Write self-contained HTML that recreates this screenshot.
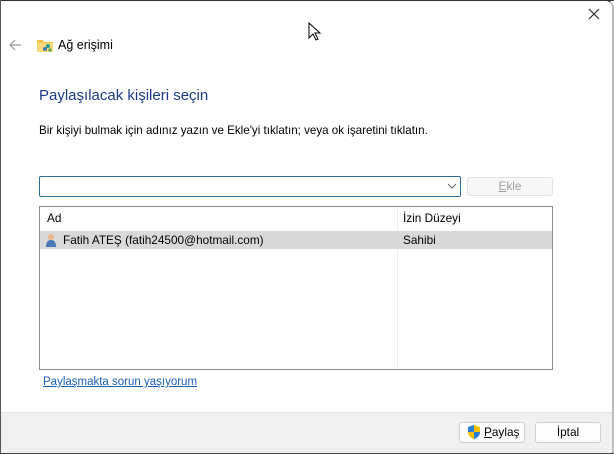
<!DOCTYPE html>
<html><head><meta charset="utf-8"><style>
body{margin:0;width:614px;height:454px;overflow:hidden;background:#fff;font-family:"Segoe UI","Liberation Sans",sans-serif;font-size:11.8px;color:#000;position:relative}
.a{position:absolute}
.win{left:0;top:0;width:612px;height:452px;border:1px solid #3a3a3a;border-top-color:#2a2a2a;box-sizing:border-box;border-radius:0 8px 0 0}
</style></head><body>
<div class="a win" style="width:614px;height:454px;border-right:2px solid #bbb;border-bottom:2px solid #444;"></div>
<div class="a" style="left:0;top:0;width:614px;height:1px;background:#333"></div>
<div class="a" style="left:0;top:0;width:1px;height:454px;background:#555"></div>
<svg class="a" style="left:588px;top:8px" width="12" height="12"><path d="M1 1L11 11M11 1L1 11" stroke="#222" stroke-width="1.1"/></svg>
<svg class="a" style="left:8px;top:39px" width="14" height="12"><path d="M13 6H2M7 1L2 6L7 11" stroke="#999" stroke-width="1.2" fill="none"/></svg>
<svg class="a" style="left:37px;top:38px" width="16" height="14"><path d="M0 2h6l1 2h9v10H0z" fill="#f3c449"/><path d="M0 5h16v9H0z" fill="#f8d878"/><circle cx="11" cy="8" r="2" fill="#2a9a8a"/><circle cx="8" cy="11" r="2" fill="#3a7ab8"/><circle cx="13" cy="12" r="1.6" fill="#4aa860"/></svg>
<div class="a" style="left:58px;top:38px;font-size:12.5px">Ağ erişimi</div>
<svg class="a" style="left:308px;top:22px" width="14" height="20"><path d="M1 1v15l4-4 3 6 2-1-3-6h5z" fill="#fff" stroke="#000"/></svg>
<div class="a" style="left:39px;top:87px;font-size:15px;color:#1c3a8a">Paylaşılacak kişileri seçin</div>
<div class="a" style="left:39px;top:124px;font-size:11.6px">Bir kişiyi bulmak için adınız yazın ve Ekle'yi tıklatın; veya ok işaretini tıklatın.</div>
<div class="a" style="left:39px;top:176px;width:422px;height:21px;border:1px solid #2b6d98;box-sizing:border-box;border-radius:2px"></div>
<svg class="a" style="left:447px;top:183px" width="10" height="7"><path d="M1 1l4 4 4-4" stroke="#666" fill="none"/></svg>
<div class="a" style="left:467px;top:177px;width:86px;height:19px;border:1px solid #e2e2e2;background:#f7f7f7;box-sizing:border-box;border-radius:3px;color:#a0a0a0;text-align:center;line-height:17px"><u>E</u>kle</div>
<div class="a" style="left:39px;top:206px;width:514px;height:164px;border:1px solid #8a8a8a;box-sizing:border-box"></div>
<div class="a" style="left:397px;top:207px;width:1px;height:162px;background:#ececec"></div>
<div class="a" style="left:47px;top:211px">Ad</div>
<div class="a" style="left:403px;top:211px">İzin Düzeyi</div>
<div class="a" style="left:40px;top:231px;width:512px;height:18px;background:#d9d9d9"></div>
<svg class="a" style="left:46px;top:233px" width="10" height="14"><circle cx="5" cy="4" r="3" fill="#e8b88a"/><path d="M0 14c0-5 2-7 5-7s5 2 5 7z" fill="#4a78b8"/></svg>
<div class="a" style="left:63px;top:233px">Fatih ATEŞ (fatih24500@hotmail.com)</div>
<div class="a" style="left:403px;top:233px">Sahibi</div>
<div class="a" style="left:43px;top:376px;color:#1a5fb4;text-decoration:underline;font-size:11.5px">Paylaşmakta sorun yaşıyorum</div>
<div class="a" style="left:1px;top:412px;width:611px;height:40px;background:#f0f0f0;border-top:1px solid #e4e4e4"></div>
<div class="a" style="left:459px;top:422px;width:66px;height:21px;border:1px solid #d0d0d0;background:#fdfdfd;box-sizing:border-box;border-radius:3px;line-height:19px;padding-left:24px">
<u>P</u>aylaş</div>
<svg class="a" style="left:467px;top:424px" width="14" height="16"><path d="M7 1L13 3v5c0 4-3 6-6 7-3-1-6-3-6-7V3z" fill="#f5c000"/><path d="M7 1v7H1V3zM7 8h6c0 4-3 6-6 7z" fill="#2d7fd3"/></svg>
<div class="a" style="left:535px;top:422px;width:66px;height:21px;border:1px solid #d0d0d0;background:#fdfdfd;box-sizing:border-box;border-radius:3px;line-height:19px;text-align:center">İptal</div>
</body></html>
